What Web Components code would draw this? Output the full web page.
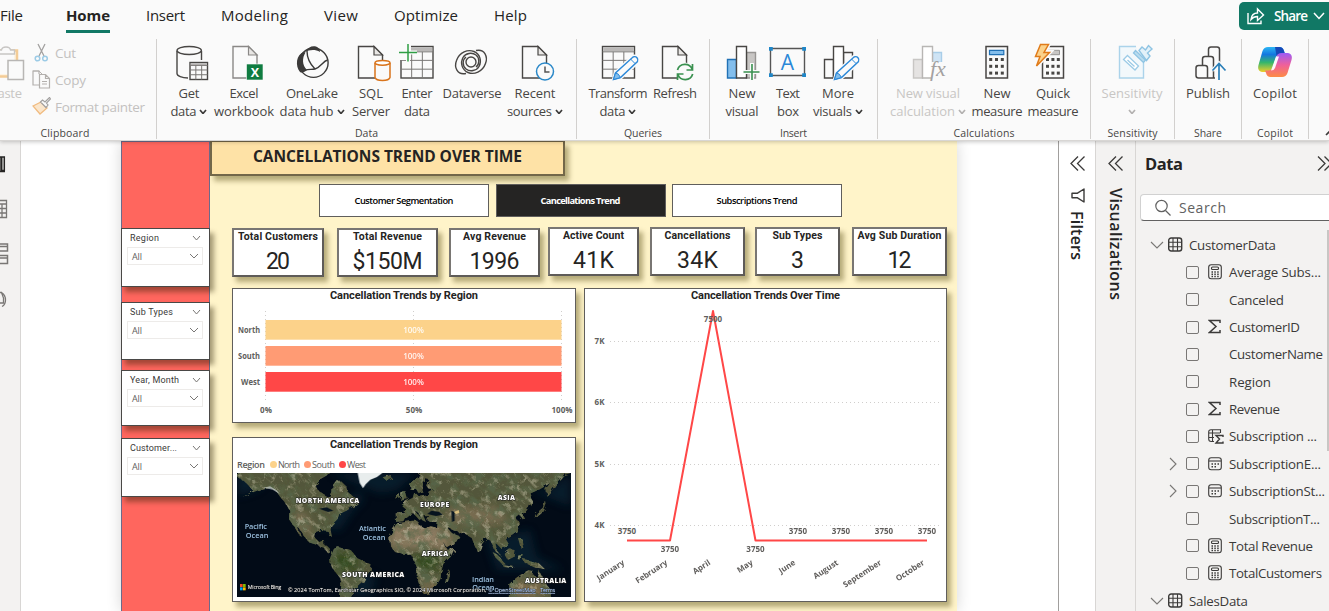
<!DOCTYPE html>
<html lang="en">
<head>
<meta charset="utf-8">
<title>Report editor</title>
<style>
  html, body { margin: 0; height: 100%; overflow: hidden; }
  body { font-family: "Open Sans", "Noto Sans", sans-serif; color: #252423; background: #fff; }
</style>
</head>
<body>
<report-app></report-app>
<script>
const define = (name, html, setup) => {
  const tpl = document.createElement('template');
  tpl.innerHTML = typeof html === 'string' ? html : '';
  customElements.define(name, class extends HTMLElement {
    connectedCallback() {
      if (this.shadowRoot) return;
      const root = this.attachShadow({ mode: 'open' });
      if (typeof html === 'function') root.innerHTML = html(this);
      else root.append(tpl.content.cloneNode(true));
      if (setup) setup(this, root);
    }
  });
};

/* Single-line label tracked to an exact run length (attribute w). */
define('fit-text', `<style>:host{display:inline-block;white-space:nowrap}span{display:inline-block}</style><span><slot></slot></span>`, (el, root) => {
  const w = parseFloat(el.getAttribute('w'));
  if (!w) return;
  const span = root.querySelector('span');
  const r = span.getBoundingClientRect();
  const vertical = getComputedStyle(el).writingMode.startsWith('vertical');
  const size = vertical ? r.height : r.width;
  const n = el.textContent.length;
  if (!size || n < 2) return;
  const ls = (w - size) / (n - 1);
  span.style.letterSpacing = ls + 'px';
  span.style[vertical ? 'marginBottom' : 'marginRight'] = -ls + 'px';
});

/* ---------- ribbon icons ---------- */
const K = '#484644', G = '#8a8886';
const page = (x, s = K) => `<path d="M${x} 46.5h15.5l8.5 8.5v23h-24z" fill="#fafafa" stroke="${s}" stroke-width="1.4"/><path d="M${x + 15.5} 46.5v8.5h8.5z" fill="#e8e6e4" stroke="${s}" stroke-width="1.2"/>`;
const grid = (x, w = 32, y = 46.5, h = 31.5) => `<rect x="${x}" y="${y}" width="${w}" height="${h}" fill="#fafafa" stroke="${K}" stroke-width="1.4"/><rect x="${x + .7}" y="${y + .7}" width="${w - 1.4}" height="${h * .13}" fill="#bab8b7"/><path d="M${x} ${y + h * .17}h${w}M${x} ${y + h * .44}h${w}M${x} ${y + h * .72}h${w}M${x + w / 3} ${y + h * .17}v${h * .83}M${x + w * 2 / 3} ${y + h * .17}v${h * .83}" stroke="#797775" stroke-width="1" fill="none"/>`;
const pencil = (x) => `<path d="M${x} 80l2-7 17.500-16.500q2.500-1 4.500 1.500t.5 4L${x + 7} 78z" fill="#fafafa" stroke="#fafafa" stroke-width="3.500"/><path d="M${x} 79.500l2-6.500 17.500-16q2.500-1 4 .8t.5 3.700L${x + 7} 77.500z" fill="#fafafa" stroke="#2b88d8" stroke-width="1.400"/><path d="M${x} 79.500l2-6.500q3 0 5 4.500zM${x + 17} 59l4.500 4.500" fill="#83beec" stroke="#2b88d8"/>`;
const keys = (x, y, d = 5.200, s = 2.800) => [0, 1, 2].map(r => [0, 1, 2].map(c => `<rect x="${x + c * d}" y="${y + r * 6.800}" width="${s}" height="${s}" fill="${K}"/>`).join('')).join('');
const RI = {
  getdata: [189, `<path d="M177 51v22.500c0 2.500 5 4.500 11 4.500M201.500 51v9" fill="none" stroke="${K}" stroke-width="1.400"/><ellipse cx="189.200" cy="50.500" rx="12.200" ry="4" fill="#fafafa" stroke="${K}" stroke-width="1.400"/>${grid(190, 17.5, 62.5, 17)}`],
  excel: [244, `${page(233, G)}<rect x="246.500" y="64" width="16.500" height="16" fill="#107c41" stroke="#fafafa" stroke-width=".6"/><text x="255" y="76.500" text-anchor="middle" font-size="12.500" font-weight="700" fill="#fff">X</text>`],
  onelake: [312, `<circle cx="313.500" cy="62.800" r="14.600" fill="none" stroke="#3b3a39" stroke-width="1.400"/><path d="M304 52C296 54 295 66 300 72C302 73 305 72 307 70C302 65 302 58 305.500 52.500ZM305 52C308 47 312 45.500 316 46.500C319 47.500 320 50 320 52C315 49 309 50 305 52Z" fill="#3b3a39"/><path d="M307 51C307 59 311 65 315 69M300.500 72C306 68 311 70 315 69C321 67 323 61 327.500 60" fill="none" stroke="#3b3a39" stroke-width="1.400"/>`],
  sql: [371, `${page(358.5)}<path d="M375 63v14.500q1 3 7.500 3t7.500-3V63" fill="#fafafa" stroke="#d9741c" stroke-width="1.500"/><ellipse cx="382.500" cy="62.800" rx="7.500" ry="2.400" fill="#fff" stroke="#d9741c" stroke-width="1.500"/>`],
  enter: [417, `${grid(401)}<path d="M399 44h12v16h-12z" fill="#fafafa"/><path d="M399 52.500h18M408 44v17.500" stroke="#fafafa" stroke-width="4"/><path d="M399 52.500h18M408 44v17.500" stroke="#2f9e44" stroke-width="1.500"/>`],
  dataverse: [472, `<g fill="none" stroke="#484644" stroke-width="1.400"><circle cx="471" cy="62" r="5"/><path d="M466 73.500C457 75.500 454 67 456.500 60.500C459.500 52 468 49 474 51.500C480 54 482 61 479 66.500C476.500 71 470 72 466 69C462 66 462.500 59.500 466 57"/><path d="M476 50.500C485 48.500 488 57 485.500 63.500C482.500 72 474 75 468 72.500C462 70 460 63 463 57.500C465.500 53 472 52 476 55C480 58 479.500 64.500 476 67"/></g>`],
  recent: [535, `${page(522.5)}<circle cx="545" cy="71.500" r="8.500" fill="#fafafa" stroke="#2b88c8" stroke-width="1.500"/><path d="M545 66.500v5.500h4.500" fill="none" stroke="#555" stroke-width="1.500"/>`],
  transform: [618, `${grid(602.5)}${pencil(613.5)}`],
  refresh: [675, `${page(662.5)}<circle cx="685" cy="72" r="9.500" fill="#fafafa"/><path d="M677.500 70a7.800 7.800 0 0 1 14.800-.5M692.500 64v6h-6M692.700 74a7.800 7.800 0 0 1-14.800.5M677.500 80v-6h6" fill="none" stroke="#3a9150" stroke-width="1.700"/>`],
  newvisual: [742, `<path d="M727.500 59.500h9v18.500h-9z" fill="#83beec" stroke="#2171b5" stroke-width="1.400"/><path d="M746.500 52.500h9v25.500h-9z" fill="#c8c6c4" stroke="#979593" stroke-width="1.400"/><path d="M736.500 46.500h10v31.500h-10z" fill="#fff" stroke="${K}" stroke-width="1.400"/><path d="M743 72h17M752 63v17" stroke="#fafafa" stroke-width="4"/><path d="M743.500 72h16M752 64v16" stroke="#3a9150" stroke-width="1.600"/>`],
  textbox: [788, `<path d="M770.500 48.500h34v27h-34z" fill="#fafafa" stroke="#555" stroke-width="1.400"/><path d="M769 47h3.800v3.800H769zM802.200 47h3.800v3.800h-3.800zM769 73.300h3.800v3.800H769zM802.200 73.300h3.800v3.800h-3.800z" fill="#1f86c8"/><text x="787.500" y="70" text-anchor="middle" font-size="21" font-weight="400" fill="#2b88d8">A</text>`],
  more: [838, `<path d="M824.500 59.500h9v18.500h-9zM843.500 52.500h9v25.500h-9z" fill="#fafafa" stroke="${K}" stroke-width="1.400"/><path d="M833.500 46.500h10v31.500h-10z" fill="#fff" stroke="${K}" stroke-width="1.400"/>${pencil(834.5)}`],
  calc: [928, `<path d="M913.500 59.500h9v18.500h-9z" fill="#e5e3e2" stroke="#c8c6c4" stroke-width="1.400"/><path d="M932.500 52.500h9v10h-9z" fill="#cfe4f5" stroke="#a8cde8" stroke-width="1.400"/><path d="M922.500 46.500h10v31.500h-10z" fill="#fff" stroke="#b8b6b4" stroke-width="1.400"/><path d="M931 62h14v18h-14z" fill="#fafafa"/><text x="930" y="76" font-family="Liberation Serif, serif" font-style="italic" font-size="22" fill="#a3a1a0">fx</text>`],
  measure: [997, `<path d="M986 46.500h21.500v31.500H986z" fill="#fafafa" stroke="${K}" stroke-width="1.500"/><path d="M989.500 50.300h14.300v4.400h-14.300z" fill="#83beec" stroke="#2171b5" stroke-width="1.200"/>${keys(989.2, 58, 5.8, 3)}`],
  quick: [1053, `<path d="M1042.500 46.500h21v31.500h-21z" fill="#fafafa" stroke="${K}" stroke-width="1.500"/><path d="M1047 50.300h12.500v4.400H1047z" fill="#c8c6c4" stroke="#979593"/>${keys(1046, 58, 5.4, 3)}<path d="M1041 44h8l-4.500 8h5.500l-14 15 3.500-10h-4.500z" fill="#fafafa" stroke="#fafafa" stroke-width="4"/><path d="M1040.500 44.500h8l-4.500 8h5.500l-13 13.500 3.500-9.500h-4.500z" fill="#fbd28b" stroke="#e07b1a" stroke-width="1.500"/>`],
  sens: [1132, `<path d="M1136 46.500h-16.500v31.500h24V63" fill="#f2f8fb" stroke="#abd3ea" stroke-width="1.400"/><path d="M1127.500 55.500l11 10.500-3.500 4L1123.500 59.500zM1127.500 60l7 6.500" fill="#fff" stroke="#9ccbe6" stroke-width="1.300"/><path d="M1139 50.500l3-3.500 3.500 3 3-4.500 3.500 3.500-4.500 4 2.500 3-3.500 4.500z" fill="#e3f1f9" stroke="#8fc4e3" stroke-width="1.400"/><path d="M1135.500 50.500l10 9.500-2 2.500-10-9.500z" fill="#b9dcef" stroke="#8fc4e3" stroke-width="1.300"/>`],
  publish: [1208, `<path d="M1208.500 57v-7.500q0-2.500 2.500-2.500h6q2.500 0 2.500 2.500v13M1202.500 65v-6q0-2.500 2.500-2.500h6q2.500 0 2.500 2.500v19" fill="none" stroke="${K}" stroke-width="1.500"/><path d="M1196 68q0-2.500 2.500-2.500h6.500q2.500 0 2.500 2.500v10h-9q-2.500 0-2.500-2.500zM1207.500 78h7.500" fill="none" stroke="${K}" stroke-width="1.500"/><path d="M1219 80V64M1212.500 70.500l6.500-7 6.500 7" fill="none" stroke="#fafafa" stroke-width="4"/><path d="M1219 80V64M1212.500 70.500l6.500-7 6.500 7" fill="none" stroke="#2b7fb8" stroke-width="1.700"/>`],
  copilot: [1275, `<defs><linearGradient id="c1" x1="0" y1="0" x2="0" y2="1"><stop offset="0" stop-color="#2cb6f4"/><stop offset=".3" stop-color="#1377e0"/><stop offset=".62" stop-color="#35b66c"/><stop offset="1" stop-color="#f0cf2a"/></linearGradient><linearGradient id="c2" x1="0" y1="0" x2="0" y2="1"><stop offset="0" stop-color="#9b5cf6"/><stop offset=".5" stop-color="#f0609a"/><stop offset="1" stop-color="#fd8b45"/></linearGradient></defs><path d="M1268 47h11.500q3.500 0 4.500 4l1 3h-5q-3 0-4 3.500l-3.500 11q-1.500 3.500-5 3.500h-4c-5 0-6-3-5-7l4-14q1.500-4 5.500-4z" fill="url(#c1)"/><path d="M1275 47h4.500q3.500 0 4.500 4l1 3h-5q-2.500 0-3.500 2z" fill="#1649b8"/><path d="M1282 77h-11.500q-3.500 0-4.500-4l-1-2.500h3.500q3.500 0 4.500-3.500l3.500-10.500q1-3.500 5-3.500h5c5 0 6 3 5 7l-4 13q-1.500 4-5.500 4z" fill="url(#c2)"/><path d="M1276 56.500h3l-4 11.500q-1 2.500-4 2.500z" fill="#fff" opacity=".95"/>`],
  paste: [6, `<path d="M-6 50.500h23v26H-6z" fill="#fdf3e2" stroke="#f3cc96" stroke-width="2.500"/><path d="M-6 54h20v20H-6z" fill="#fafafa"/><path d="M-3 54v-4h4.500q.5-3 4.500-3t4.500 3h4v4z" fill="#fafafa" stroke="#c8c6c4" stroke-width="1.300"/><path d="M8 60.500h15.500v19H8z" fill="#fafafa" stroke="#b8b6b4" stroke-width="1.500"/>`]
};
const chev = (w, h, c, s = 1) => `<svg width="${w}" height="${h}" viewBox="0 0 ${w} ${h}"><path d="M1 1l${w / 2 - 1} ${h - 2} ${w / 2 - 1}-${h - 2}" fill="none" stroke="${c}" stroke-width="${s}"/></svg>`;

define('ribbon-button', el => {
  const [c, art] = RI[el.getAttribute('icon')];
  const dim = el.hasAttribute('dim');
  const lines = el.getAttribute('label').split('|').map(l => {
    const [t, w, more] = l.split(':');
    return `<div>${t ? `<fit-text w="${w}">${t}</fit-text>` : ''}${more ? chev(8, 5.5, dim ? '#b3b1b0' : '#3b3a39', 1.7) : ''}</div>`;
  }).join('');
  return `<style>:host{display:flex;flex-direction:column;align-items:center;flex:none;width:${el.getAttribute('width')}px;font-size:13px;line-height:18px;color:${dim ? '#c8c6c4' : '#484644'}}
  .art{display:block;margin-bottom:4px;overflow:visible;flex:none}div{display:flex;align-items:center;justify-content:center;gap:3px;height:18px;white-space:nowrap}div svg{margin-top:1px;flex:none}</style>
  <svg class="art" width="40" height="36" viewBox="${c - 20} 44 40 36">${art}</svg>${lines}`;
});
define('ribbon-group', el => `<style>:host{display:flex;flex-direction:column;flex:none;box-sizing:border-box;width:${el.getAttribute('width')}px;height:100px;border-right:1px solid #d2d0ce}
  .row{display:flex;flex:none;height:88px;padding:5px 0 0 ${el.getAttribute('pad') || 0}px;box-sizing:border-box}.cap{flex:none;font-size:10.5px;line-height:13px;text-align:center;color:#484644}</style>
  <div class="row"><slot></slot></div><div class="cap"><fit-text w="${el.getAttribute('cw')}">${el.getAttribute('caption')}</fit-text></div>`);
define('clip-command', el => {
  const art = {
    cut: '<path d="M6 1l6 12M13 1L7 13" stroke="#a3a1a0" stroke-width="1.300"/><circle cx="5.500" cy="15.500" r="2.300" stroke="#9ccbe6" stroke-width="1.500"/><circle cx="13" cy="15.500" r="2.300" stroke="#9ccbe6" stroke-width="1.500"/>',
    copy: '<path d="M7 4V1H1v14h6M7.500 4.500h6l4 4v9.500h-10zM13.500 4.500v4h4M10 11.500h5M10 14h5" stroke="#b3b0ad" stroke-width="1.200"/><path d="M1 1h6l3 3" stroke="#b3b0ad"/>',
    brush: '<path d="M1 9l8-4 6 6-7 6z" stroke="#f0bb80" fill="#fbe6cb" stroke-width="1.300"/><path d="M8.500 5l2-2 2.500 2 4.500-4.500 1 1.500-4 4 1.500 2-2 2.500z" stroke="#a3a1a0" fill="#fafafa" stroke-width="1.200"/>'
  }[el.getAttribute('icon')];
  return `<style>:host{display:flex;align-items:center;gap:4px;height:27px;font-size:13.500px;color:#c3c1bf}</style><svg width="19" height="19" fill="none">${art}</svg><fit-text w="${el.getAttribute('w')}">${el.getAttribute('label')}</fit-text>`;
});

define('menu-tab', el => `<style>:host{display:block;flex:none;height:33px;box-sizing:border-box;margin-left:${el.getAttribute('gap')}px;font-size:15px;line-height:31px;color:#252423}
  :host([active]){font-weight:700;border-bottom:3px solid #117865}</style><fit-text w="${el.getAttribute('w')}">${el.getAttribute('label')}</fit-text>`);

define('app-ribbon', `<style>
  :host{display:block;height:141px;background:#fafafa;overflow:hidden;border-bottom:1px solid #d8d6d4;box-sizing:border-box;box-shadow:0 1px 4px rgba(0,0,0,.22);position:relative;z-index:2}
  .tabs{display:flex;height:39px;align-items:flex-start}
  .share{margin-left:auto;width:90px;height:28px;margin-top:2px;box-sizing:border-box;background:#117865;border-radius:5px 0 0 5px;display:flex;align-items:center;padding-left:7px;color:#fff;font-size:13.500px;font-weight:600;flex:none}
  .share fit-text{margin:0 5px 0 9px}.groups{display:flex;margin-left:-26px}
  .cmds{display:flex;flex-direction:column;margin:-5px 0 0 3px}.end{align-self:flex-end;margin:0 0 3px 16px}
</style>
<div class="tabs">
  <menu-tab gap="0" w="23" label="File"></menu-tab><menu-tab gap="43" w="44" label="Home" active></menu-tab><menu-tab gap="36" w="39" label="Insert"></menu-tab><menu-tab gap="36" w="67" label="Modeling"></menu-tab><menu-tab gap="36" w="34" label="View"></menu-tab><menu-tab gap="36" w="64" label="Optimize"></menu-tab><menu-tab gap="36" w="33" label="Help"></menu-tab>
  <div class="share"><svg width="19" height="18" fill="none" stroke="#fff" stroke-width="1.400"><path d="M2 6v10.500h13v-3"/><path d="M5 12.500C5.500 8 8 6 11.500 6V2l6 6-6 5.500V9.500C9 9.500 7 10 5 12.500z"/></svg><fit-text w="34">Share</fit-text><svg width="12" height="8"><path d="M1 1l5 5.500L11 1" fill="none" stroke="#fff" stroke-width="1.500"/></svg></div>
</div>
<div class="groups">
  <ribbon-group width="183" caption="Clipboard" cw="49" pad="9"><ribbon-button icon="paste" width="46" label="Paste:32" dim></ribbon-button><div class="cmds"><clip-command icon="cut" w="21" label="Cut"></clip-command><clip-command icon="copy" w="31" label="Copy"></clip-command><clip-command icon="brush" w="90" label="Format painter"></clip-command></div></ribbon-group>
  <ribbon-group width="420" caption="Data" cw="23" pad="8">
    <ribbon-button icon="getdata" width="48" label="Get:21|data:26:v"></ribbon-button><ribbon-button icon="excel" width="62" label="Excel:29|workbook:60"></ribbon-button><ribbon-button icon="onelake" width="74" label="OneLake:52|data hub:54:v"></ribbon-button><ribbon-button icon="sql" width="44" label="SQL:24|Server:38"></ribbon-button><ribbon-button icon="enter" width="48" label="Enter:31|data:26"></ribbon-button><ribbon-button icon="dataverse" width="62" label="Dataverse:59"></ribbon-button><ribbon-button icon="recent" width="64" label="Recent:41|sources:45:v"></ribbon-button>
  </ribbon-group>
  <ribbon-group width="133" caption="Queries" cw="38" pad="11"><ribbon-button icon="transform" width="60" label="Transform:59|data:26:v"></ribbon-button><ribbon-button icon="refresh" width="54" label="Refresh:44"></ribbon-button></ribbon-group>
  <ribbon-group width="168" caption="Insert" cw="27" pad="10"><ribbon-button icon="newvisual" width="44" label="New:27|visual:33"></ribbon-button><ribbon-button icon="textbox" width="48" label="Text:24|box:22"></ribbon-button><ribbon-button icon="more" width="52" label="More:32|visuals:39:v"></ribbon-button></ribbon-group>
  <ribbon-group width="213" caption="Calculations" cw="61" pad="8"><ribbon-button icon="calc" width="84" label="New visual:64|calculation:65:v" dim></ribbon-button><ribbon-button icon="measure" width="54" label="New:27|measure:51"></ribbon-button><ribbon-button icon="quick" width="58" label="Quick:34|measure:51"></ribbon-button></ribbon-group>
  <ribbon-group width="84" caption="Sensitivity" cw="50" pad="1"><ribbon-button icon="sens" width="80" label="Sensitivity:61|::v" dim></ribbon-button></ribbon-group>
  <ribbon-group width="67" caption="Share" cw="28"><ribbon-button icon="publish" width="66" label="Publish:44"></ribbon-button></ribbon-group>
  <ribbon-group width="67" caption="Copilot" cw="36"><ribbon-button icon="copilot" width="66" label="Copilot:44"></ribbon-button></ribbon-group>
  <svg class="end" width="10" height="6"><path d="M1 5l4-4 4 4" fill="none" stroke="#3b3a39" stroke-width="1.600"/></svg>
</div>`);

/* ---------- left rail ---------- */
define('view-rail', `<style>:host{display:flex;flex-direction:column;flex:none;width:21px;box-sizing:border-box;background:#f3f2f1;border-right:1px solid #d8d6d4;padding-top:14px;gap:24px}svg{display:block}</style>
<svg width="20" height="20" fill="none" stroke="#252423" stroke-width="1.500"><path d="M-3 2h4v14M1 2v14M-3 16.500H5M1.700 2h2.600v13.500H1.700z"/></svg>
<svg width="20" height="20" fill="none" stroke="#797775" stroke-width="1.300"><path d="M-5 1.500H6.500v17H-5zM-5 5h11.500M-5 9.500h11.500M-5 14h11.500M2 5v13"/></svg>
<svg width="20" height="22" fill="none" stroke="#797775" stroke-width="1.500"><path d="M-3 1h10.500v7H-3zM-3 3.500h10.500M-3 12.500h10.500v8H-3zM-3 15h10.500"/></svg>
<svg width="20" height="22" fill="none" stroke="#797775" stroke-width="1.300"><path d="M0 3.500h1.500L3.500 9v5L0 14M1.500 3.500Q5.500 6 5.500 11t-3.500 6.500"/></svg>`);

/* ---------- report visuals ---------- */
define('slicer-box', el => `<style>:host{display:block;flex:none;box-sizing:border-box;height:${el.getAttribute('h')}px;margin-top:${el.getAttribute('gap')}px;background:#fff;border:1px solid #4a4846;box-shadow:4px 5px 5px rgba(40,30,0,.42);padding:0 6px 0 5px;color:#3b3a39;font-size:9px}
.h{display:flex;justify-content:space-between;align-items:center;height:18px;box-sizing:border-box;padding:0 2px 0 3px;font-family:Roboto,sans-serif}.b{display:flex;justify-content:space-between;align-items:center;height:18px;box-sizing:border-box;border:1px solid #edebe9;padding:0 3px 0 4px;color:#605e5c}</style>
<div class="h"><fit-text w="${el.getAttribute('w')}">${el.getAttribute('label')}</fit-text>${chev(9, 6, '#797775', 1)}</div><div class="b"><fit-text w="10">All</fit-text>${chev(10, 6, '#797775', 1)}</div>`);
define('kpi-card', el => {
  const a = n => el.getAttribute(n);
  return `<style>:host{display:flex;flex-direction:column;align-items:center;flex:none;box-sizing:border-box;height:${49 - (a('drop') || 0) * .5}px;width:${a('width')}px;margin-left:${a('gap')}px;margin-top:${a('drop') || 0}px;background:#fff;border:2px solid #797673;border-right-color:#5e5b58;border-bottom-color:#5e5b58;box-shadow:4px 5px 5px rgba(70,60,0,.4);font-family:Roboto,"Open Sans",sans-serif;color:#252423}
  .t{font-size:10.500px;font-weight:700;line-height:13px}.v{font-size:23px;line-height:28px;margin-top:4.500px}</style>
  <fit-text class="t" w="${a('tw')}">${a('label')}</fit-text><fit-text class="v" w="${a('vw')}">${a('value')}</fit-text>`;
});
define('nav-button', el => `<style>:host{display:flex;align-items:center;justify-content:center;flex:none;box-sizing:border-box;width:170px;height:33px;background:#fff;border:1px solid #605e5c;font-size:9.300px;font-weight:600;color:#000}:host([active]){background:#252423;color:#fff;font-weight:700}</style><fit-text w="${el.getAttribute('w')}">${el.getAttribute('label')}</fit-text>`);
define('visual-card', el => `<style>:host{display:flex;flex-direction:column;box-sizing:border-box;background:#fff;border:1px solid #605e5c;box-shadow:4px 5px 5px rgba(70,60,0,.4)}
.t{height:15px;text-align:center;font-family:Roboto,"Open Sans",sans-serif;font-size:11px;font-weight:700;line-height:13px;flex:none}</style><div class="t"><fit-text w="${el.getAttribute('tw')}">${el.getAttribute('label')}</fit-text></div><slot></slot>`);

define('bar-chart', () => {
  const rows = [['North', '#fcd28a', 320], ['South', '#ff9b74', 346], ['West', '#ff4747', 372]];
  return `<style>:host{display:block}svg{display:block}text{font-size:8px;font-weight:700;fill:#605e5c}</style>
  <svg width="342" height="117" viewBox="233 304 342 117">
  <path d="M265.500 311v92M413.500 311v92M561.500 311v92" stroke="#d0cecc" stroke-dasharray="1 3"/>
  ${rows.map(([n, c, y]) => `<rect x="265.500" y="${y}" width="296" height="19.700" fill="${c}"/><text x="260" y="${y + 13}" text-anchor="end" textLength="22" lengthAdjust="spacingAndGlyphs">${n}</text><text x="413.500" y="${y + 13}" text-anchor="middle" style="fill:#fff;font-weight:600;opacity:.9">100%</text>`.replace(n === 'West' ? 'textLength="22"' : '\0', 'textLength="19"')).join('')}
  <text x="266" y="413" text-anchor="middle">0%</text><text x="414" y="413" text-anchor="middle">50%</text><text x="562" y="413" text-anchor="middle">100%</text></svg>`;
});
define('line-chart', () => {
  const xs = [627, 670, 713, 755.5, 798, 841, 884, 927];
  const m = ['January', 'February', 'April', 'May', 'June', 'August', 'September', 'October'];
  const below = [1, 3];
  return `<style>:host{display:block}svg{display:block}text{font-size:8px;font-weight:700;fill:#605e5c}.d{text-anchor:middle}</style>
  <svg width="361" height="297" viewBox="585 304 361 297">
  <path d="M610 341.500H941M610 402.500H941M610 464.500H941M610 525.500H941" stroke="#d0cecc" stroke-dasharray="1 3"/>
  ${[341, 402, 464, 525].map((y, i) => `<text x="594.500" y="${y + 3}" textLength="10">${7 - i}K</text>`).join('')}
  <path d="M627 540.500H670L713 311L755.500 540.500H927" fill="none" stroke="#ff4747" stroke-width="2" stroke-linejoin="round"/>
  ${xs.map((x, i) => `<text class="d" x="${x}" y="${i === 2 ? 322 : below.includes(i) ? 552 : 534}">${i === 2 ? 7500 : 3750}</text><text text-anchor="end" transform="translate(${x - 2} 564) rotate(-33)">${m[i]}</text>`).join('')}</svg>`;
});
define('geo-map', `<style>:host{display:block;margin:20px 0 0 4px}svg{display:block}
.l{font-weight:800;font-size:20.500px;fill:#fff;paint-order:stroke;stroke:#1a1a1a;stroke-width:3px}.o{font-weight:600;font-size:22px;fill:#9cc0df}.c{font-size:16.500px;fill:#fff;paint-order:stroke;stroke:#222;stroke-width:2px}</style>
<svg width="334" height="124" viewBox="21 129 1002 372">
<defs>
<filter id="dark" x="0" y="0" width="100%" height="100%"><feTurbulence type="fractalNoise" baseFrequency=".03" numOctaves="5" seed="7"/><feColorMatrix values="0 0 0 0 .1  0 0 0 0 .14  0 0 0 0 .07  3.500 0 0 0 -1.500"/></filter>
<filter id="light" x="0" y="0" width="100%" height="100%"><feTurbulence type="fractalNoise" baseFrequency=".05" numOctaves="4" seed="21"/><feColorMatrix values="0 0 0 0 .72  0 0 0 0 .66  0 0 0 0 .5  0 4 0 0 -2.100"/></filter>
<filter id="bl"><feGaussianBlur stdDeviation="12"/></filter>
<filter id="edge" x="-5%" y="-5%" width="110%" height="110%"><feTurbulence type="fractalNoise" baseFrequency=".06" numOctaves="3" result="n"/><feDisplacementMap in="SourceGraphic" in2="n" scale="16"/></filter>
<clipPath id="cp"><use href="#land"/></clipPath></defs>
<rect x="21" y="129" width="1002" height="372" fill="#020b17"/>
<path d="M300 129L450 190 500 180 560 129zM250 290L330 300 370 240 400 210 390 180zM770 330L900 300 920 380 1000 420 800 420zM380 420l60 20-20 61h-60zM900 180l60 0 60-51v100zM21 129h120l-60 50-60 20z" fill="#0c2e40" opacity=".5" filter="url(#bl)"/>
<g filter="url(#edge)"><path id="land" fill="#53573a" d="M21 120H300L292 135 272 147 258 165 266 182 285 196 300 203 307 188 308 166 320 150 338 158 352 172 356 190 376 203 388 216 372 228 348 243 328 252 322 268 304 286 302 300 306 320 298 318 293 303 275 300 258 306 256 325 268 336 282 330 283 345 296 352 300 368 290 366 278 350 262 345 236 337 222 318 206 294 200 290 216 320 210 318 190 286 177 268 178 240 168 222 150 200 138 182 118 170 95 176 62 190 35 203 70 182 60 172 45 155 21 140z
M312 356L326 352 346 357 366 364 382 385 402 394 425 404 422 420 408 440 398 460 382 474 368 490 360 510H325L330 470 332 446 316 426 302 405 300 385z
M500 280L522 277 546 272 562 272 566 284 586 295 602 289 622 293 633 316 643 346 652 359 673 357 662 380 640 402 634 425 632 446 616 470 597 490 580 493 570 470 560 442 562 416 552 390 545 375 520 374 495 366 480 345 478 325 488 300z
M646 458L650 432 660 420 658 445 650 462z
M498 275L497 250 524 250 526 236 514 226 530 212 548 203 552 190 562 194 570 200 592 196 596 184 610 178 596 176 588 166 598 150 588 148 578 168 578 184 566 190 558 176 542 180 540 164 560 148 575 120H1023V129L1000 136 985 152 968 178 950 198 946 178 960 160 930 178 902 190 908 214 890 242 878 252 886 268 876 266 870 256 860 264 870 282 862 302 845 315 826 324 836 342 816 358 800 342 796 340 802 362 814 378 796 364 788 345 780 330 770 325 756 342 746 370 735 350 725 324 708 314 676 304 660 296 654 294 666 310 688 318 680 334 650 352 640 336 622 306 618 290 620 276 600 276 588 268 596 256 580 256 588 276 576 270 566 250 556 244 574 266 568 270 550 250 538 252 526 262 520 274z
M510 212L516 184 526 184 534 208zM496 206l2-14 10-2 2 12zM458 142l24-6 6 10-16 8zM912 262l8-14 18-14 6-22 6 10-8 22-20 16zM786 362l20 16 18 22-8 2-20-20zM824 372l16-14 14 2-4 22-16 8zM816 402l34 6-2 4-30-4zM862 372l16 0-6 20-8-2zM864 324l10 0 6 30-8 0zM878 386l24 6 24 8 20 18-34-6-28-14zM836 512L838 462 858 444 878 430 896 420 910 424 908 434 920 440 926 418 936 440 948 462 966 484 958 512z"/>
<g clip-path="url(#cp)"><g filter="url(#bl)"><path d="M480 285H625L665 355H480z" fill="#8d7b62"/><path d="M620 290l70 20-40 50zM660 230L800 230 840 275 750 285 640 275zM190 240l40 10 20 70-50-20z" fill="#857458" opacity=".75"/><path d="M850 450h90v60h-90zM570 450h50v40h-50z" fill="#7c6a4b"/><path d="M310 370h70v50h-60zM545 372h80v45h-60z" fill="#30491f"/></g>
<rect x="21" y="120" width="1002" height="381" filter="url(#dark)" opacity=".75"/><rect x="21" y="120" width="1002" height="381" filter="url(#light)" opacity=".4"/></g></g>
<path d="M592 252l12-10 24 4 10 8-20 4zM664 242l10 4 0 26-8 4zM268 236l22-4 20 10-16 4z" fill="#06141f"/>
<path d="M383 129l6 30 10 16 8-12 14-14 20-8 16-12z" fill="#e8eded"/><path d="M100 173l20-4 20 12 10 12-22-14-14-3z" fill="#dfe5e5" opacity=".6"/><path d="M672 246l14-6 2 9-10 3z" fill="#d7bd7d"/>
<g class="l"><text x="197" y="218" textLength="191">NORTH AMERICA</text><text x="570" y="230" textLength="88">EUROPE</text><text x="803" y="209" textLength="52">ASIA</text><text x="575" y="377" textLength="80">AFRICA</text><text x="336" y="442" textLength="187">SOUTH AMERICA</text><text x="885" y="459" textLength="124">AUSTRALIA</text></g>
<g class="o"><text x="44" y="296" textLength="67">Pacific</text><text x="47" y="323" textLength="68">Ocean</text><text x="387" y="303" textLength="81">Atlantic</text><text x="398" y="329" textLength="68">Ocean</text><text x="726" y="455" textLength="66">Indian</text><text x="727" y="480" textLength="66">Ocean</text></g>
<path d="M30 462h8v9h-8z" fill="#f25022"/><path d="M39 462h8v9h-8z" fill="#7fba00"/><path d="M30 472h8v9h-8z" fill="#00a4ef"/><path d="M39 472h8v9h-8z" fill="#ffb900"/>
<g class="c"><text x="53" y="477" textLength="101">Microsoft Bing</text><text x="174" y="486" textLength="595">© 2024 TomTom, Earthstar Geographics SIO, © 2024 Microsoft Corporation,</text><text x="775" y="486" textLength="142" text-decoration="underline" style="fill:#c9dbff;stroke:#234">© OpenStreetMap</text><text x="931" y="486" textLength="44" text-decoration="underline" style="fill:#c9dbff;stroke:#234">Terms</text></g>
</svg>`);
define('map-legend', `<style>:host{display:flex;align-items:center;height:12px;margin:5px 0 -17px 4px;font-size:9px;color:#605e5c}b{font-weight:600;margin-right:5px;display:block}i{width:7px;height:7px;border-radius:50%;margin-right:1px}fit-text.k{margin-right:4px}</style>
<b><fit-text w="28">Region</fit-text></b><i style="background:#fcd28a"></i><fit-text class="k" w="22">North</fit-text><i style="background:#ff9b74"></i><fit-text class="k" w="23">South</fit-text><i style="background:#ff4747"></i><fit-text class="k" w="19">West</fit-text>`);

define('report-page', `<style>
:host{display:flex;width:836px;height:470px;margin-left:100px;flex:none;background:#fff4c9;box-shadow:0 0 14px rgba(0,0,0,.16)}
.strip{width:89px;box-sizing:border-box;background:#ff665e;border:1px solid #6c6a8a;border-width:1px 1px 0 1px;flex:none}
.strip slicer-box{margin-left:-1px;margin-right:-1px}
.main{display:flex;flex-direction:column;width:747px}
.title{box-sizing:border-box;width:355px;height:35px;background:#fee2a6;border:2px solid #736749;border-top-width:1px;box-shadow:4px 5px 5px rgba(70,60,0,.4);text-align:center;font-size:15.500px;font-weight:700;line-height:29px}
.nav{display:flex;gap:6.500px;margin:8px 0 0 109px}.cards{display:flex;align-items:flex-start;height:49px;margin-top:10px}
.charts{display:grid;grid-template-columns:344px 363px;gap:0 8px;margin:12px 0 0 22px}.col{display:grid;grid-template-rows:135px 165px;gap:14px}
</style>
<div class="strip"><slicer-box gap="86" h="59" w="29" label="Region"></slicer-box><slicer-box gap="15" h="58" w="43" label="Sub Types"></slicer-box><slicer-box gap="10" h="56" w="49" label="Year, Month"></slicer-box><slicer-box gap="12" h="59" w="47" label="Customer..."></slicer-box></div>
<div class="main">
<div class="title"><fit-text w="269">CANCELLATIONS TREND OVER TIME</fit-text></div>
<div class="nav"><nav-button w="99" label="Customer Segmentation"></nav-button><nav-button active w="80" label="Cancellations Trend"></nav-button><nav-button w="81" label="Subscriptions Trend"></nav-button></div>
<div class="cards"><kpi-card width="92" gap="22" drop="1" label="Total Customers" tw="80" value="20" vw="24"></kpi-card><kpi-card width="101" gap="13" drop="1" label="Total Revenue" tw="69" value="$150M" vw="70"></kpi-card><kpi-card width="91" gap="11" drop="1" label="Avg Revenue" tw="63" value="1996" vw="50"></kpi-card><kpi-card width="91" gap="8" label="Active Count" tw="61" value="41K" vw="41"></kpi-card><kpi-card width="95" gap="11" label="Cancellations" tw="66" value="34K" vw="41"></kpi-card><kpi-card width="85" gap="10" label="Sub Types" tw="50" value="3" vw="0"></kpi-card><kpi-card width="95" gap="12" label="Avg Sub Duration" tw="84" value="12" vw="24"></kpi-card></div>
<div class="charts"><div class="col"><visual-card label="Cancellation Trends by Region" tw="148"><bar-chart></bar-chart></visual-card><visual-card label="Cancellation Trends by Region" tw="148"><map-legend></map-legend><geo-map></geo-map></visual-card></div><visual-card label="Cancellation Trends Over Time" tw="149"><line-chart></line-chart></visual-card></div>
</div>`);

/* ---------- right panes ---------- */
const dbl = (dir) => `<svg width="15" height="15" viewBox="0 0 15 15" fill="none" stroke="#3b3a39" stroke-width="1.300">${dir < 0 ? '<path d="M8 .5L1 7.500l7 7M14.500.5l-7 7 7 7"/>' : '<path d="M1 .5l7 7-7 7M7.500.5l7 7-7 7"/>'}</svg>`;
define('side-pane', el => `<style>:host{display:flex;flex-direction:column;align-items:center;flex:none;box-sizing:border-box;border-left:1px solid #d8d6d4;padding-top:15px}
.v{writing-mode:vertical-rl;font-size:16px;font-weight:600;line-height:22px;color:#252423}</style>${dbl(-1)}<slot></slot><fit-text class="v" w="${el.getAttribute('w')}">${el.getAttribute('label')}</fit-text>`);

const FI = {
  calc: '<rect x=".7" y=".7" width="12.600" height="14" rx="2.500"/><rect x="3.500" y="3" width="7" height="2.500" rx="1"/><path d="M3.500 8h1.500M6.300 8h1.500M9.200 8h1.500M3.500 10.300h1.500M6.300 10.300h1.500M9.200 10.300h1.500M3.500 12.500h1.500M6.300 12.500h1.500M9.200 12.500h1.500" stroke-width="1.500"/>',
  sum: '<path d="M12 4V1.500H1.500l6.500 6-6.500 6H12V11" stroke-width="1.500"/>',
  date: '<rect x=".7" y="1.700" width="12.600" height="12" rx="2.500"/><path d="M1 5h12"/><path d="M6.500 8h1.500M9.500 8h1.500M3.500 10.800h1.500M6.500 10.800h1.500M3.500 8h1.500" stroke-width="1.500"/>',
  table: '<rect x=".7" y="1" width="13" height="13" rx="2.500" stroke-width="1.400"/><path d="M5 1v13M9.500 1v13M1 5.300h13M1 9.800h13"/>',
  group: '<path d="M12.500 5V1.700H3Q.7 1.700.7 4v7q0 2.500 2.500 2.500H6M4.500 2v11M1 5h11M1 9.500h5"/><path d="M15 9V7.500H8l3.500 3.500L8 15h7v-1.500" stroke-width="1.400"/>'
};
define('field-row', el => {
  const a = n => el.getAttribute(n), root = el.hasAttribute('table');
  const icon = FI[a('icon')] || '';
  return `<style>:host{display:flex;align-items:center;height:27.370px;font-size:13.300px;color:#3b3a39}.e{width:${root ? 14 : 13}px;margin-left:${root ? 14 : 30}px;display:flex;justify-content:center}.c{width:13px;height:13px;box-sizing:border-box;border:1px solid #797775;border-radius:2px;margin-left:7px}.i{width:16px;height:16px;margin:0 5px 0 ${root ? 4 : 9}px}</style>
  <span class="e">${root ? chev(14, 8, '#797775', 1.1) : el.hasAttribute('expand') ? '<svg width="8" height="14"><path d="M1 1l6 6-6 6" fill="none" stroke="#797775" stroke-width="1.100"/></svg>' : ''}</span>${root ? '' : '<span class="c"></span>'}<svg class="i" viewBox="0 0 16 16" fill="none" stroke="#3b3a39" stroke-width="1.100">${icon}</svg><fit-text w="${a('w')}">${a('label')}</fit-text>`;
});
define('data-pane', `<style>:host{display:block;flex:none;width:194px;box-sizing:border-box;border-left:1px solid #d8d6d4;background:#f3f2f1;overflow:hidden}
.head{display:flex;align-items:center;height:53px;box-sizing:border-box;padding:0 0 8px 9px;font-size:16.500px;font-weight:700}.head svg{margin-left:134px;flex:none}
.search{display:flex;align-items:center;width:200px;height:27px;box-sizing:border-box;margin-left:4px;background:#fff;border:1px solid #d1d1d1;border-bottom-color:#616161;border-radius:4px;padding-left:14px;gap:8px;font-size:14px;color:#616161}
.body{display:flex;justify-content:space-between;margin-top:10.300px}.list{width:190px;flex:none;padding-left:0}.bar{width:2px;height:221px;background:#c8c6c4;margin-top:-1px;flex:none}</style>
<div class="head"><fit-text w="38">Data</fit-text>${dbl(1)}</div>
<div class="search"><svg width="16" height="17" fill="none" stroke="#616161" stroke-width="1.200"><circle cx="6.500" cy="7" r="5.700"/><path d="M10.500 11.500l5 5"/></svg><fit-text w="47">Search</fit-text></div>
<div class="body"><div class="list">
<field-row table icon="table" label="CustomerData" w="87"></field-row>
<field-row icon="calc" label="Average Subs..." w="92"></field-row><field-row label="Canceled" w="55"></field-row><field-row icon="sum" label="CustomerID" w="71"></field-row><field-row label="CustomerName" w="94"></field-row><field-row label="Region" w="42"></field-row><field-row icon="sum" label="Revenue" w="51"></field-row><field-row icon="group" label="Subscription ..." w="88"></field-row><field-row expand icon="date" label="SubscriptionE..." w="92"></field-row><field-row expand icon="date" label="SubscriptionSt..." w="96"></field-row><field-row label="SubscriptionT..." w="91"></field-row><field-row icon="calc" label="Total Revenue" w="84"></field-row><field-row icon="calc" label="TotalCustomers" w="93"></field-row>
<field-row table icon="table" label="SalesData" w="59"></field-row>
</div><div class="bar"></div></div>`);

define('report-app', `<style>:host{display:flex;flex-direction:column;width:1329px;height:611px;overflow:hidden}
.work{display:flex;height:470px;flex:none}.canvas{width:1037px;flex:none;overflow:hidden;background:#fff}
.filters{width:37px;border-left-color:#a19f9d;background:#fff}.vis{width:40px;background:#f3f2f1}.filters svg{margin:17px 0 8px}</style>
<app-ribbon></app-ribbon>
<div class="work"><view-rail></view-rail><div class="canvas"><report-page></report-page></div>
<side-pane class="filters" label="Filters" w="49"><svg width="15" height="15" fill="none" stroke="#3b3a39" stroke-width="1.400"><path d="M14 1v13L7.500 9.800H2V5.200h5.500z" stroke-linejoin="round"/></svg></side-pane>
<side-pane class="vis" label="Visualizations" w="112"><span style="height:17px"></span></side-pane>
<data-pane></data-pane></div>`);
</script>
</body>
</html>
